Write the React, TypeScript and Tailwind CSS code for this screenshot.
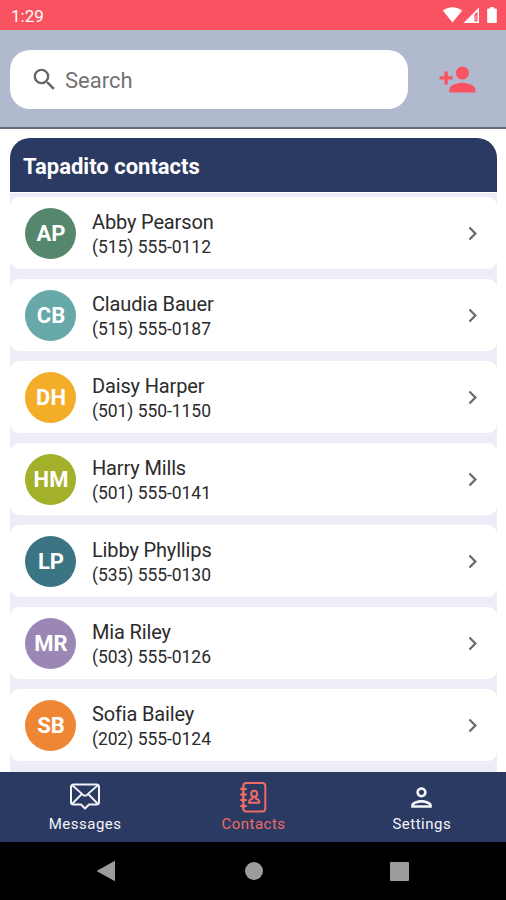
import React from "react";
import {
  MdChevronRight,
  MdOutlinePerson,
  MdPersonAdd,
  MdSearch,
} from "react-icons/md";

const CONTACTS = [
  { initials: "AP", name: "Abby Pearson", phone: "(515) 555-0112", color: "bg-[#54876b]" },
  { initials: "CB", name: "Claudia Bauer", phone: "(515) 555-0187", color: "bg-[#67a8a8]" },
  { initials: "DH", name: "Daisy Harper", phone: "(501) 550-1150", color: "bg-[#f4ad28]" },
  { initials: "HM", name: "Harry Mills", phone: "(501) 555-0141", color: "bg-[#a2b02a]" },
  { initials: "LP", name: "Libby Phyllips", phone: "(535) 555-0130", color: "bg-[#3b7583]" },
  { initials: "MR", name: "Mia Riley", phone: "(503) 555-0126", color: "bg-[#9b87b6]" },
  { initials: "SB", name: "Sofia Bailey", phone: "(202) 555-0124", color: "bg-[#ef8633]" },
];

function StatusBar() {
  return (
    <div className="flex h-[30px] shrink-0 items-center justify-between bg-[#f95260] pr-[7px] pl-[11px] text-white">
      <span className="pt-0.5 text-[17px] leading-none">1:29</span>
      <svg width="56" height="18" viewBox="0 0 56 18" fill="currentColor">
        <path d="M0 4.8C2.4 2.6 5.8 1.3 9.5 1.3s7.1 1.3 9.5 3.5L9.5 16.5z" />
        <path d="M36 1.500v15.500H20.500z" />
        <path d="M31.500 8.500l3-3v10h-3z" fill="#f95260" />
        <path d="M32.500 9.500h1v5.500h-1z" fillOpacity="0.5" />
        <path d="M47.200 1h3.600v1.500h2.200c.5 0 .8.3.8.8v12.900c0 .5-.3.8-.8.8h-8c-.5 0-.8-.3-.8-.8V3.300c0-.5.3-.8.8-.8h2.200z" />
      </svg>
    </div>
  );
}

function SearchHeader() {
  return (
    <header className="flex h-[99px] shrink-0 items-center border-b-2 border-[#65707a] bg-[#b0b9ce] pt-px pl-2.5">
      <div className="flex h-[59px] w-[398px] items-center rounded-[20px] bg-white pl-5 text-[#737373]">
        <MdSearch className="size-[29px] text-[#666666]" />
        <span className="pt-0.5 pl-1.5 text-[22px]">Search</span>
      </div>
      <button className="ml-[30px] text-[#f95260]" aria-label="Add contact">
        <MdPersonAdd className="size-[39px]" />
      </button>
    </header>
  );
}

function ContactRow({ contact }: { contact: (typeof CONTACTS)[number] }) {
  return (
    <li className="flex h-[72px] shrink-0 items-center rounded-[9px] bg-white pr-[11px] pl-[15px]">
      <span
        className={`grid size-[51px] shrink-0 place-items-center rounded-full pt-0.5 pl-px text-[22px] leading-none font-bold text-white ${contact.color}`}
      >
        {contact.initials}
      </span>
      <div className="flex-1 pl-4 text-[#2b2b2b]">
        <p className="pt-1 text-[20px] leading-[25px] tracking-[-0.150px]">{contact.name}</p>
        <p className="text-[17.500px] leading-[25px] tracking-[-0.050px]">{contact.phone}</p>
      </div>
      <MdChevronRight className="size-[27px] text-[#6b6b6b]" />
    </li>
  );
}

function MessagesIcon() {
  return (
    <svg width="32" height="30" viewBox="0 0 32 30" fill="none" stroke="currentColor" strokeWidth="2" strokeLinejoin="round">
      <path d="M4.500 2.500h23a2.500 2.500 0 0 1 2.500 2.500v15a2.500 2.500 0 0 1-2.500 2.500H20l-4 4-4-4H4.500A2.500 2.500 0 0 1 2 20V5a2.500 2.500 0 0 1 2.500-2.500z" />
      <path d="M3.500 3.500l10.300 9.200c1.300 1.100 3.100 1.100 4.400 0l10.300-9.200M3.500 21.500l9.300-9.500M28.500 21.500l-9.300-9.500" strokeWidth="1.800" />
    </svg>
  );
}

function ContactsIcon() {
  return (
    <svg width="28" height="32" viewBox="0 0 28 32" fill="none" stroke="currentColor" strokeWidth="2" strokeLinecap="round" strokeLinejoin="round">
      <rect x="4.300" y="2" width="22" height="28.500" rx="3" />
      <path d="M2 8h5M2 13.500h5M2 19h5M2 25h5" />
      <path d="M4.300 7v2M4.300 12.500v2M4.300 18v2M4.300 24v2" strokeWidth="3" />
      <circle cx="15.200" cy="12.700" r="3" />
      <path d="M13.600 15.500v2c-2.200.5-3.500 1.600-3.500 4.200h10.200c0-2.600-1.300-3.700-3.500-4.200v-2" />
    </svg>
  );
}

function TabBar() {
  const tabs = [
    { label: "Messages", icon: <MessagesIcon />, active: false },
    { label: "Contacts", icon: <ContactsIcon />, active: true },
    { label: "Settings", icon: <MdOutlinePerson className="size-[31px]" />, active: false },
  ];

  return (
    <nav className="grid h-[70px] shrink-0 grid-cols-3 bg-[#2b3a62] pl-px">
      {tabs.map((t) => (
        <button
          key={t.label}
          className={[
            "flex flex-col items-center pt-2",
            t.active ? "text-[#ef6b68]" : "text-[#f4f5fa]",
          ].join(" ")}
        >
          <span className="flex h-[34px] items-center">{t.icon}</span>
          <span className="text-[15px] leading-5 tracking-[0.500px]">{t.label}</span>
        </button>
      ))}
    </nav>
  );
}

function SystemBar() {
  return (
    <div className="grid h-[58px] shrink-0 grid-cols-[211px_85px_210px] items-center bg-black text-[#9c9c9c]">
      <svg className="ml-[96px]" width="20" height="22" viewBox="0 0 20 22" fill="currentColor">
        <path d="M0.500 11L19 .7v20.600z" />
      </svg>
      <span className="size-[18px] justify-self-center rounded-full bg-[#9c9c9c]" />
      <span className="ml-[94px] size-[19px] rounded-[1px] bg-[#9c9c9c]" />
    </div>
  );
}

export default function App() {
  return (
    <div className="flex h-[900px] w-[506px] flex-col overflow-hidden bg-white font-[Roboto,sans-serif]">
      <StatusBar />
      <SearchHeader />
      <main className="flex min-h-0 flex-1 flex-col overflow-hidden pt-[9px] pr-[9px] pl-2.5">
        <h1 className="flex h-[54px] shrink-0 items-center rounded-t-[20px] bg-[#2b3a62] pt-0.5 pl-[13px] text-[22px] font-bold text-white">
          Tapadito contacts
        </h1>
        <ul className="mt-px flex min-h-0 flex-1 flex-col gap-2.5 overflow-hidden bg-[#ecedf6] pt-1">
          {CONTACTS.map((c) => (
            <ContactRow key={c.initials} contact={c} />
          ))}
        </ul>
      </main>
      <TabBar />
      <SystemBar />
    </div>
  );
}
